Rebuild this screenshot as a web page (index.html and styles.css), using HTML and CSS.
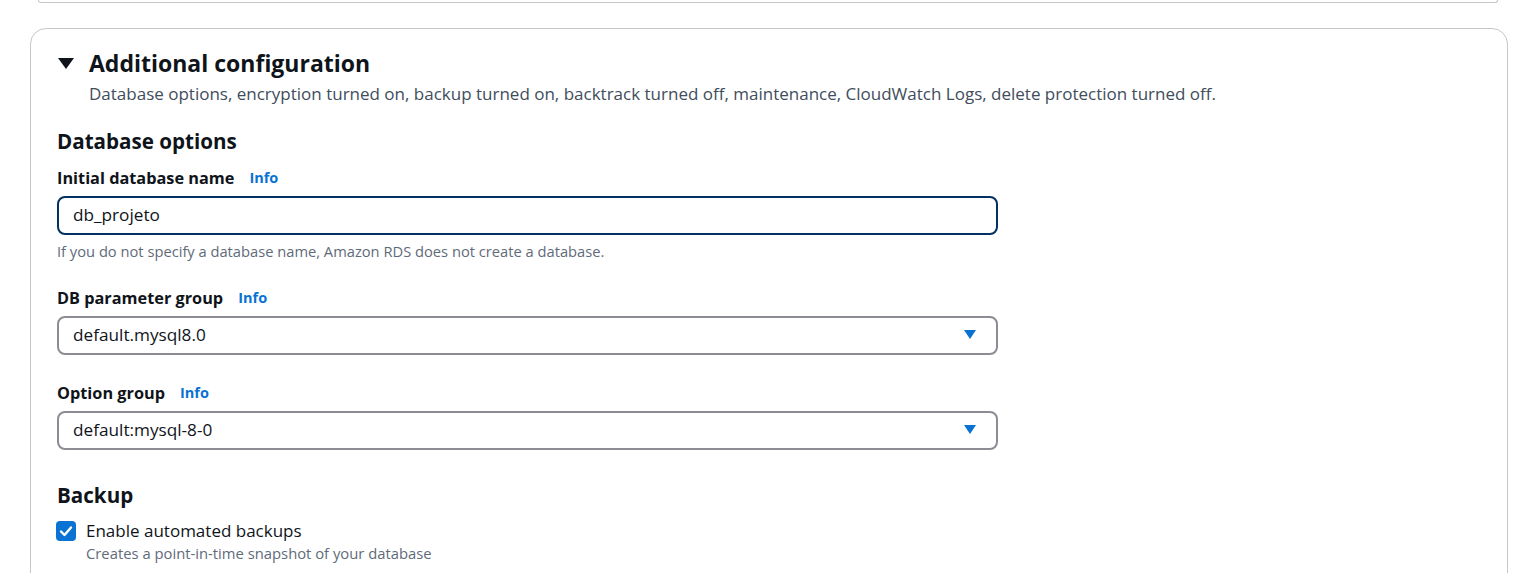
FILE: index.html
```html
<!DOCTYPE html>
<html lang="en">
<head>
<meta charset="utf-8">
<title>Additional configuration</title>
<link rel="stylesheet" href="styles.css">
</head>
<body>
<div class="page">
  <div class="prev-card"></div>
  <section class="card">
    <div class="exp-header">
      <svg class="exp-caret" width="18" height="14" viewBox="0 0 18 14"><polygon points="1,2 17,2 9,13" fill="#0f141a"/></svg>
      <div class="exp-titles">
        <h2 class="exp-title">Additional configuration</h2>
        <p class="exp-desc">Database options, encryption turned on, backup turned on, backtrack turned off, maintenance, CloudWatch Logs, delete protection turned off.</p>
      </div>
    </div>

    <h3 class="sec-title sec-first">Database options</h3>

    <div class="field field-first">
      <div class="label-row"><span class="label">Initial database name</span><a class="info">Info</a></div>
      <div class="input input-focus">db_projeto</div>
      <p class="hint">If you do not specify a database name, Amazon RDS does not create a database.</p>
    </div>

    <div class="field field-gap">
      <div class="label-row"><span class="label">DB parameter group</span><a class="info">Info</a></div>
      <div class="input select"><span>default.mysql8.0</span>
        <svg class="sel-caret" width="12" height="9" viewBox="0 0 12 9"><polygon points="0,0 12,0 6,9" fill="#0972d3"/></svg>
      </div>
    </div>

    <div class="field field-gap2">
      <div class="label-row"><span class="label">Option group</span><a class="info">Info</a></div>
      <div class="input select"><span>default:mysql-8-0</span>
        <svg class="sel-caret" width="12" height="9" viewBox="0 0 12 9"><polygon points="0,0 12,0 6,9" fill="#0972d3"/></svg>
      </div>
    </div>

    <h3 class="sec-title sec-backup">Backup</h3>
    <div class="check-row">
      <span class="checkbox">
        <svg width="20" height="20" viewBox="0 0 20 20"><polyline points="5,10.5 8.5,14 15,6.5" fill="none" stroke="#ffffff" stroke-width="2.4" stroke-linecap="round" stroke-linejoin="round"/></svg>
      </span>
      <div class="check-text">
        <span class="check-label">Enable automated backups</span>
        <span class="check-desc">Creates a point-in-time snapshot of your database</span>
      </div>
    </div>
  </section>
</div>
</body>
</html>
```

FILE: styles.css
```css
* { box-sizing: border-box; }
html, body { margin: 0; padding: 0; background: #ffffff; }
body {
  font-family: "Open Sans", "Noto Sans", "Liberation Sans", sans-serif;
  color: #0f141a;
  height: 573px;
  overflow: hidden;
}
.page { position: relative; }
.prev-card {
  height: 3px;
  margin: 0 35px 0 38px;
  border: 1px solid #c6c6cd;
  border-top: none;
  border-radius: 0 0 16px 16px;
}
.card {
  margin: 25px 25px 0 30px;
  border: 1px solid #c6c6cd;
  border-radius: 16px;
  padding: 20px 26px 40px 26px;
  min-height: 600px;
}
.exp-header { display: flex; align-items: flex-start; gap: 14px; }
.exp-caret { margin-top: 7px; flex: none; }
.exp-title {
  margin: 0;
  font-size: 23px;
  line-height: 28px;
  font-weight: 700;
}
.exp-desc {
  margin: 7px 0 0;
  font-size: 17px;
  line-height: 20px;
  color: #414d5c;
}
.sec-title {
  margin: 0;
  font-size: 20.6px;
  line-height: 24px;
  font-weight: 700;
}
.sec-first { margin-top: 25px; }
.sec-backup { margin-top: 33px; }
.field-first { margin-top: 15px; }
.field-gap { margin-top: 29px; }
.field-gap2 { margin-top: 28px; }
.label-row { display: flex; align-items: center; gap: 15px; height: 20px; }
.label { font-size: 16.3px; font-weight: 700; line-height: 20px; }
.info { font-size: 14.5px; font-weight: 700; color: #0972d3; line-height: 20px; }
.input {
  margin-top: 8px;
  width: 941px;
  height: 39px;
  border: 2px solid #8c8c94;
  border-radius: 8px;
  padding: 0 14px 2px;
  display: flex;
  align-items: center;
  font-size: 17.2px;
  color: #0f141a;
}
.input-focus { border-color: #033160; }
.select { justify-content: space-between; padding-right: 20px; }
.sel-caret { flex: none; }
.hint {
  margin: 8px 0 0;
  font-size: 14.7px;
  line-height: 16px;
  color: #5f6b7a;
}
.check-row { display: flex; gap: 10px; margin-top: 14px; margin-left: -1px; }
.checkbox {
  width: 20px; height: 20px;
  border-radius: 4px;
  background: #0972d3;
  flex: none;
  display: block;
}
.checkbox svg { display: block; }
.check-text { display: flex; flex-direction: column; }
.check-label { font-size: 17px; line-height: 20px; }
.check-desc { margin-top: 4px; font-size: 14.8px; line-height: 16px; color: #5f6b7a; }
```
